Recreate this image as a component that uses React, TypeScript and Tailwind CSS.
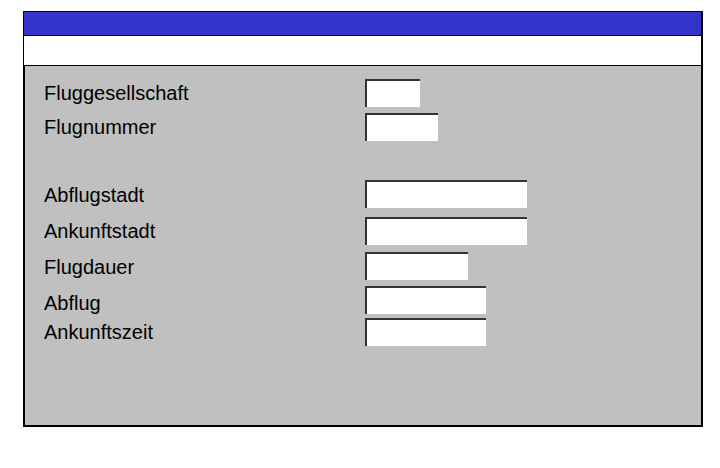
const rows = [
  { label: 'Fluggesellschaft', width: 'w-[55px]', gap: 'mt-0', shift: '' },
  { label: 'Flugnummer', width: 'w-[73px]', gap: 'mt-[6px]', shift: '' },
  { label: 'Abflugstadt', width: 'w-[162px]', gap: 'mt-[39px]', shift: 'translate-y-[1px]' },
  { label: 'Ankunftstadt', width: 'w-[162px]', gap: 'mt-[9px]', shift: '' },
  { label: 'Flugdauer', width: 'w-[103px]', gap: 'mt-[7px]', shift: 'translate-y-[1px]' },
  { label: 'Abflug', width: 'w-[121px]', gap: 'mt-[6px]', shift: 'translate-y-[3px]' },
  { label: 'Ankunftszeit', width: 'w-[121px]', gap: 'mt-[4px]', shift: '' },
];

function Field({ width }: { width: string }) {
  return <div className={`h-[28px] ${width} bg-white border-t-2 border-l-2 border-[#333333]`} />;
}

export default function App() {
  return (
    <div className="pl-[23px] pt-[11px] bg-white min-h-[468px]" style={{ fontFamily: '"Liberation Sans", Arial, sans-serif' }}>
      <div className="w-[680px] h-[416px] flex flex-col border-t border-l border-r-2 border-b-2 border-black">
        <div className="h-[23px] bg-[#3333cc] border-b border-black box-content" />
        <div className="h-[29px] bg-white border-b border-black box-content" />
        <div className="flex-1 bg-[#c0c0c0] border-l border-black pl-[19px] pt-[13px]">
          {rows.map((row) => (
            <div key={row.label} className={`flex items-center h-[28px] ${row.gap}`}>
              <span className={`w-[321px] text-[20px] leading-none text-black ${row.shift}`}>{row.label}</span>
              <Field width={row.width} />
            </div>
          ))}
        </div>
      </div>
    </div>
  );
}
